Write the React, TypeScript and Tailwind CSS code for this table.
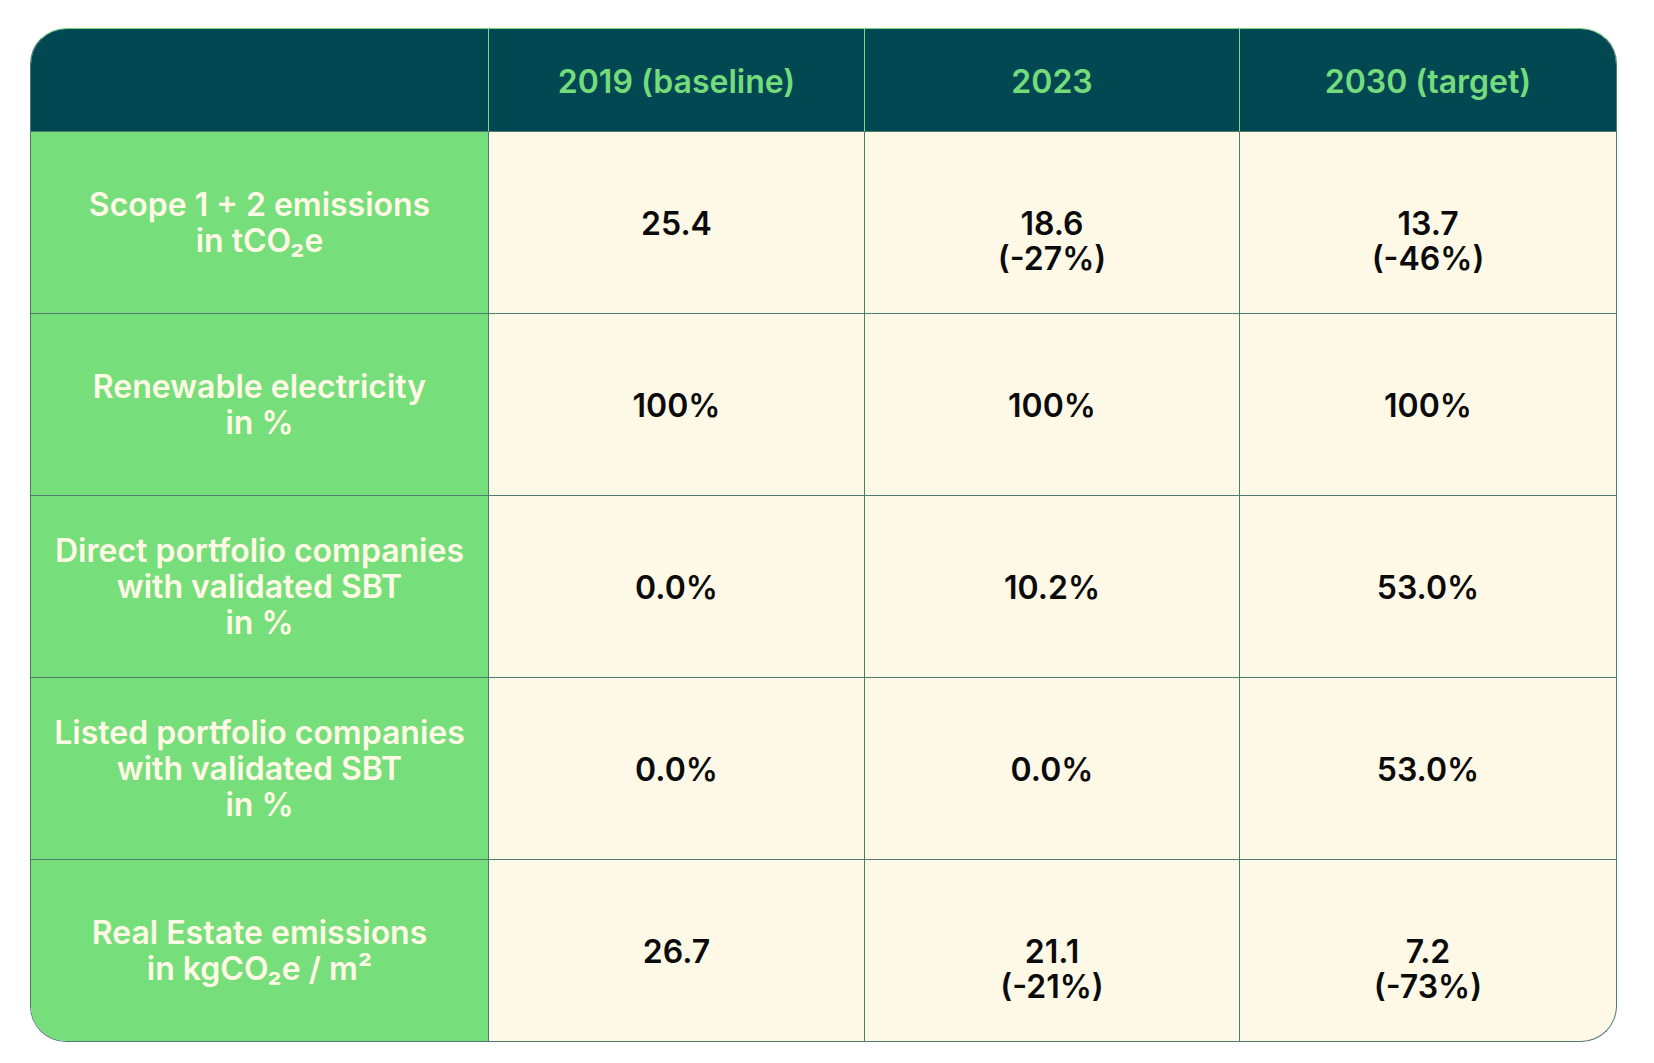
type Row = {
  label: string[]
  values: [string, string?][]
}

const rows: Row[] = [
  {
    label: ['Scope 1 + 2 emissions', 'in tCO₂e'],
    values: [['25.4'], ['18.6', '(-27%)'], ['13.7', '(-46%)']],
  },
  {
    label: ['Renewable electricity', 'in %'],
    values: [['100%'], ['100%'], ['100%']],
  },
  {
    label: ['Direct portfolio companies', 'with validated SBT', 'in %'],
    values: [['0.0%'], ['10.2%'], ['53.0%']],
  },
  {
    label: ['Listed portfolio companies', 'with validated SBT', 'in %'],
    values: [['0.0%'], ['0.0%'], ['53.0%']],
  },
  {
    label: ['Real Estate emissions', 'in kgCO₂e / m²'],
    values: [['26.7'], ['21.1', '(-21%)'], ['7.2', '(-73%)']],
  },
]

const headers = ['2019 (baseline)', '2023', '2030 (target)']

function App() {
  return (
    <div className="min-h-screen bg-white pl-[30px] pt-[28px] font-['Inter',sans-serif]">
      <div className="w-[1587px] overflow-hidden rounded-[36px] border border-[#4f7a70] border-t-[#7ad97f] bg-[#fef9e7]">
        <div className="grid grid-cols-[457px_376px_375px_377px]">
          {/* header */}
          <div className="h-[102px] bg-[#024853]" />
          {headers.map((h) => (
            <div
              key={h}
              className="flex h-[102px] items-center justify-center border-l border-[#7ad97f] bg-[#024853] pt-[3px] text-[32px] font-[640] text-[#74dc7b]"
            >
              {h}
            </div>
          ))}

          {rows.map((row, i) => (
            <div key={i} className="contents">
              <div className="flex h-[182px] flex-col items-center justify-center border-t border-[#4f7a70] bg-[#76df7c] text-center text-[32px] font-[640] leading-[36px] text-[#fff9e6]">
                {row.label.map((l) => (
                  <span key={l}>{l}</span>
                ))}
              </div>
              {row.values.map(([v, d], j) => (
                <div
                  key={j}
                  className="flex h-[182px] flex-col items-center justify-center border-l border-t border-[#4f7a70] pt-[2px] text-[32px] font-[640] leading-[35px] text-[#0b0b0b]"
                >
                  <span>{v}</span>
                  {d && <span className="-mb-[35px]">{d}</span>}
                </div>
              ))}
            </div>
          ))}
        </div>
      </div>
    </div>
  )
}

export default App
